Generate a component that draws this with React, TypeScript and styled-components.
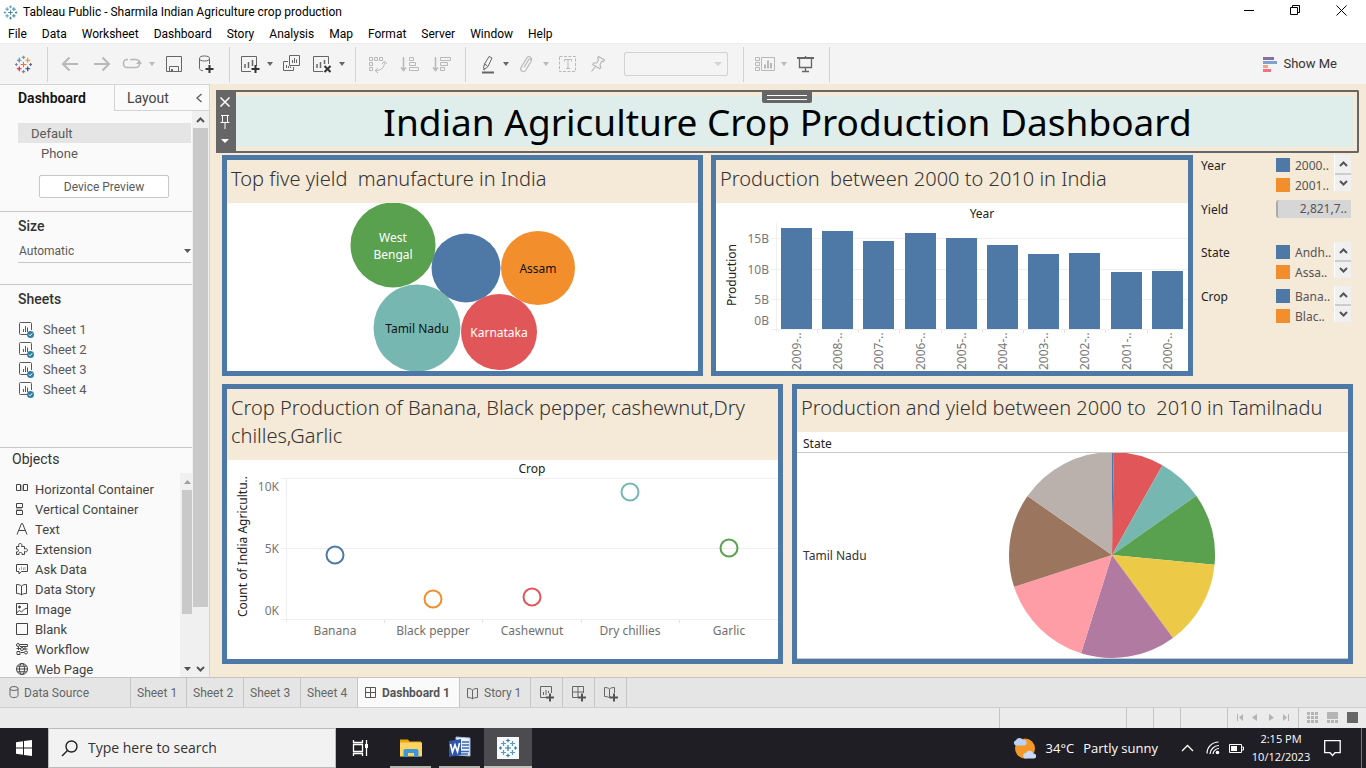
import React from "react";
import styled, { createGlobalStyle, css } from "styled-components";

const uiFont = `"Open Sans", "Noto Sans", sans-serif`;
const panelFont = `Roboto, "Liberation Sans", sans-serif`;
const vizFont = `"Noto Sans", "Open Sans", sans-serif`;

const color = {
  blue: "#4e79a7",
  orange: "#f28e2b",
  red: "#e15759",
  teal: "#76b7b2",
  green: "#59a14f",
  yellow: "#edc948",
  purple: "#b07aa1",
  pink: "#ff9da7",
  brown: "#9c755f",
  grey: "#bab0ac",
  canvas: "#f5e9d8",
  dark: "#666666",
};

const GlobalStyle = createGlobalStyle`
  *, *::before, *::after { box-sizing: border-box; }
  body { margin: 0; background: #fff; }
  button, input, select {
    font: inherit; color: inherit; background: none; border: 0; padding: 0; margin: 0;
    border-radius: 0; outline: none;
  }
  ul { list-style: none; margin: 0; padding: 0; }
  h1, h2 { margin: 0; font: inherit; }
  svg { display: block; }
`;

const Page = styled.div`
  display: flex;
  flex-direction: column;
  height: 100vh;
  min-height: 640px;
  overflow: hidden;
  font-family: ${panelFont};
`;

/* ---------- Window title and menus ---------- */

const TitleBar = styled.header`
  display: flex;
  align-items: center;
  height: 24px;
  flex: none;
  padding: 0 2px 0 3px;
  font: 12px/16px ${panelFont};
  color: #000;
`;
const WindowTitle = styled.h1`
  flex: 1;
  margin-left: 5px;
`;
const WindowButton = styled.button`
  display: flex;
  width: 46px;
  height: 24px;
  padding-top: 5px;
  justify-content: center;
`;
const MenuBar = styled.nav`
  display: flex;
  height: 19px;
  flex: none;
  padding-left: 1px;
  font: 12px/20px ${panelFont};
  color: #000;
`;
const MenuItem = styled.button`
  padding: 0 8px 0 7px;
`;

/* ---------- Toolbar ---------- */

const Toolbar = styled.div`
  display: flex;
  align-items: stretch;
  height: 41px;
  flex: none;
  background: #f4f4f4;
  border-top: 1px solid #ececec;
`;
const ToolGroup = styled.div<{ $flush?: boolean }>`
  display: flex;
  align-items: center;
  padding: ${(p) => (p.$flush ? 0 : "0 7px 0 6px")};
`;
const ToolSeparator = styled.div`
  width: 1px;
  margin: 3px 0 2px;
  background: #d2d2d2;
`;
const ToolButton = styled.button<{ $w: number; $off?: boolean }>`
  display: flex;
  align-items: center;
  justify-content: center;
  width: ${(p) => p.$w}px;
  height: 32px;
  color: ${(p) => (p.$off ? "#b8b8b8" : "#666")};
`;
const FitSelect = styled.div`
  display: flex;
  align-items: center;
  width: 104px;
  height: 24px;
  margin: 0 8px 0 12px;
  padding-right: 5px;
  border: 1px solid #d2d2d2;
  border-radius: 2px;
  color: #d2d2d2;
  select {
    flex: 1;
    appearance: none;
  }
`;
const ShowMe = styled.button`
  display: flex;
  align-items: center;
  gap: 6px;
  margin: 0 29px 0 auto;
  font: 13px/18px ${panelFont};
  color: #333;
`;

/* ---------- Side pane ---------- */

const Main = styled.main`
  display: flex;
  flex: 1;
  min-height: 0;
`;
const SidePane = styled.aside`
  display: flex;
  flex-direction: column;
  width: 210px;
  flex: none;
  background: #fafafa;
  border-top: 1px solid #d4d4d4;
  border-right: 1px solid #d4d4d4;
  color: #5a5a5a;
  font-size: 13px;
`;
const PaneTabs = styled.div`
  display: flex;
  height: 26px;
  flex: none;
`;
const PaneTab = styled.button<{ $active?: boolean }>`
  text-align: left;
  ${(p) =>
    p.$active
      ? css`
          width: 114px;
          padding-left: 18px;
          font-size: 14px;
          font-weight: 600;
          color: #111;
        `
      : css`
          flex: 1;
          padding-left: 12px;
          border-left: 1px solid #d4d4d4;
          border-bottom: 1px solid #d4d4d4;
          font-size: 14px;
          color: #444;
        `}
`;
const CollapseButton = styled.button`
  display: flex;
  align-items: center;
  justify-content: center;
  width: 20px;
  border-bottom: 1px solid #d4d4d4;
`;
const PaneBody = styled.div`
  display: flex;
  flex: 1;
  min-height: 0;
`;
const PaneContent = styled.div`
  display: flex;
  flex-direction: column;
  flex: 1;
  min-width: 0;
`;
const Section = styled.section<{ $h: number }>`
  height: ${(p) => p.$h}px;
  flex: none;
  padding: 0 1px 0 18px;
  border-bottom: 1px solid #c8c8c8;
`;
const DeviceList = styled.ul`
  padding-top: 12px;
`;
const Device = styled.li<{ $active?: boolean }>`
  height: 20px;
  padding-left: ${(p) => (p.$active ? 13 : 23)}px;
  line-height: 21px;
  background: ${(p) => (p.$active ? "#e5e5e5" : "none")};
`;
const PreviewButton = styled.button`
  display: block;
  width: 130px;
  height: 23px;
  margin: 12px 0 0 21px;
  border: 1px solid #c8c8c8;
  border-radius: 2px;
  background: #fff;
  font-size: 12px;
`;
const SectionTitle = styled.h2`
  padding: 4px 0 0;
  font-size: 14px;
  line-height: 20px;
  font-weight: 500;
  color: #333;
`;
const SizeField = styled.div`
  display: flex;
  align-items: center;
  height: 26px;
  margin-top: 1px;
  padding-top: 2px;
  border-bottom: 1px solid #c8c8c8;
  font-size: 12px;
  select {
    flex: 1;
    padding-left: 1px;
    appearance: none;
  }
`;
const ItemList = styled.ul`
  padding-top: 10px;
`;
const Item = styled.li<{ $gap: number }>`
  display: flex;
  align-items: center;
  gap: ${(p) => p.$gap}px;
  height: 20px;
  white-space: nowrap;
`;
const ObjectsSection = styled.section`
  display: flex;
  flex-direction: column;
  flex: 1;
  min-height: 0;
`;
const ObjectsTitle = styled.h2`
  padding: 1px 0 4px 12px;
  font-size: 14px;
  line-height: 20px;
  color: #333;
`;
const ObjectsBody = styled.div`
  display: flex;
  flex: 1;
  min-height: 0;
  overflow: hidden;
  color: #444;
`;
const ObjectList = styled.ul`
  flex: 1;
  padding: 6px 0 0 15px;
`;
const Scrollbar = styled.div<{ $w: number; $pad: string }>`
  display: flex;
  flex-direction: column;
  align-items: center;
  width: ${(p) => p.$w}px;
  flex: none;
  padding: ${(p) => p.$pad};
  background: #f0f0f0;
`;
const ScrollArrow = styled.button`
  display: flex;
  align-items: center;
  justify-content: center;
  width: 100%;
  height: 17px;
  flex: none;
`;
const ScrollTrack = styled.div`
  flex: 1;
  width: 100%;
`;
const ScrollThumb = styled.div<{ $size: string }>`
  height: ${(p) => p.$size};
  background: #c9c9c9;
`;

/* ---------- Dashboard canvas ---------- */

const Canvas = styled.section`
  display: flex;
  flex-direction: column;
  flex: 1;
  min-width: 0;
  padding: 6px 0 13px;
  background: ${color.canvas};
  font-family: ${vizFont};
  color: #333;
`;
const TitleZone = styled.div`
  position: relative;
  display: flex;
  height: 63px;
  flex: none;
  margin: 0 7px 2px 6px;
  border: 2px solid ${color.dark};
  border-left: 0;
  border-radius: 0 2px 2px 0;
`;
const ZoneControls = styled.div`
  display: flex;
  flex-direction: column;
  width: 20px;
  background: ${color.dark};
  color: #fff;
  button {
    display: flex;
    align-items: center;
    justify-content: center;
    width: 18px;
    height: 20px;
  }
`;
const ZoneGrip = styled.div`
  position: absolute;
  top: 0;
  left: 50%;
  width: 50px;
  height: 11px;
  margin-left: -25px;
  padding: 3px 5px 0;
  border-radius: 0 0 2px 2px;
  background: ${color.dark};
  &::before {
    content: "";
    display: block;
    height: 5px;
    border-top: 1px solid #fff;
    border-bottom: 1px solid #fff;
  }
`;
const DashboardTitle = styled.h1`
  flex: 1;
  margin: 4px 4px 4px 0;
  padding-right: 14px;
  background: #dfeeea;
  color: #000;
  font-size: 37px;
  line-height: 51px;
  height: 51px;
  text-align: center;
  white-space: nowrap;
`;
const Row = styled.div<{ $grow: number; $gap: number; $top?: number }>`
  display: flex;
  gap: ${(p) => p.$gap}px;
  flex: ${(p) => p.$grow} 1 0;
  min-height: 0;
  margin-top: ${(p) => p.$top ?? 0}px;
  padding: 0 13px 0 12px;
`;
const Panel = styled.article<{ $grow?: number }>`
  display: flex;
  flex-direction: column;
  flex: ${(p) => p.$grow ?? 1} 1 0;
  min-width: 0;
  border: 5px solid ${color.blue};
  background: #fff;
`;
const PanelTitle = styled.h2`
  flex: none;
  padding: 5px 4px 10px;
  background: ${color.canvas};
  color: #333;
  font-size: 20px;
  line-height: 28px;
  font-weight: 300;
  white-space: pre-wrap;
`;
const Chart = styled.svg`
  flex: 1 1 0;
  width: 100%;
  min-height: 0;
  font-family: ${vizFont};
  font-size: 12px;
`;

const Legends = styled.div`
  display: flex;
  flex-direction: column;
  width: 152px;
  flex: none;
`;
const Legend = styled.div<{ $h: number }>`
  display: flex;
  height: ${(p) => p.$h}px;
  flex: none;
  font-size: 12px;
`;
const LegendName = styled.span`
  width: 75px;
  line-height: 22px;
  color: #222;
`;
const LegendKeys = styled.ul`
  flex: 1;
`;
const LegendKey = styled.li<{ $fill: string }>`
  display: flex;
  align-items: center;
  gap: 5px;
  height: 20px;
  color: #555;
  &::before {
    content: "";
    width: 14px;
    height: 14px;
    background: ${(p) => p.$fill};
  }
`;
const LegendScroll = styled.div`
  width: 17px;
  height: 36px;
  margin-right: 2px;
  background: #f0f0f0;
  border-left: 1px solid #fff;
  button {
    display: flex;
    align-items: center;
    justify-content: center;
    width: 16px;
    height: 18px;
  }
  button + button {
    border-top: 2px solid #cdcdcd;
  }
`;
const YieldRange = styled.div`
  width: 75px;
  height: 18px;
  margin-top: 1px;
  padding-right: 4px;
  border-left: 2px solid #aaa;
  border-radius: 3px 0 0 3px;
  background: #d6d6d6;
  color: #555;
  line-height: 18px;
  text-align: right;
`;

/* ---------- Sheet tabs and status ---------- */

const SheetTabs = styled.nav`
  display: flex;
  height: 31px;
  flex: none;
  background: #e5e5e5;
  border-top: 1px solid #c4c4c4;
  border-bottom: 1px solid #cfcfcf;
  font-size: 12px;
  color: #666;
`;
const SheetTab = styled.button<{ $w: number; $active?: boolean }>`
  display: flex;
  align-items: center;
  gap: 5px;
  width: ${(p) => p.$w}px;
  padding-left: 6px;
  border-right: 1px solid #c4c4c4;
  white-space: nowrap;
  ${(p) =>
    p.$active &&
    css`
      background: #fafafa;
      font-weight: 700;
      color: #555;
    `}
`;
const StatusBar = styled.div`
  display: flex;
  justify-content: flex-end;
  height: 20px;
  flex: none;
  background: #ebebeb;
`;
const StatusCell = styled.div<{ $w: number }>`
  display: flex;
  align-items: center;
  justify-content: space-around;
  width: ${(p) => p.$w}px;
  padding: 0 4px 1px;
  border-left: 1px solid #c4c4c4;
  color: #b4b4b4;
`;

/* ---------- Taskbar ---------- */

const Taskbar = styled.footer`
  display: flex;
  align-items: stretch;
  height: 40px;
  flex: none;
  background: #1f1e24;
  color: #fff;
  font: 11px/18px ${uiFont};
`;
const TaskButton = styled.button<{ $w: number; $running?: boolean; $active?: boolean }>`
  display: flex;
  align-items: center;
  justify-content: center;
  width: ${(p) => p.$w}px;
  ${(p) =>
    p.$running &&
    css`
      margin: 0 4px;
      width: ${p.$w - 8}px;
      border-bottom: 2px solid #b5b5ae;
      border-top: 2px solid transparent;
    `}
  ${(p) =>
    p.$active &&
    css`
      background: #4b4b50;
      border-bottom: 2px solid #c3c3bc;
      padding-top: 2px;
    `}
`;
const SearchBox = styled.label`
  display: flex;
  align-items: center;
  gap: 10px;
  width: 288px;
  padding-left: 12px;
  background: #f2f2f2;
  border: 1px solid #bbb;
  color: #222;
  input {
    flex: 1;
    min-width: 0;
    font-size: 14px;
  }
  input::placeholder {
    color: #333;
    opacity: 1;
  }
`;
const Tray = styled.div`
  display: flex;
  align-items: center;
  margin-left: auto;
`;
const TrayButton = styled.button<{ $w: number }>`
  display: flex;
  align-items: center;
  justify-content: center;
  width: ${(p) => p.$w}px;
  height: 40px;
`;
const Weather = styled.button`
  display: flex;
  align-items: center;
  gap: 9px;
  margin-right: 15px;
  font-size: 13px;
`;
const Clock = styled.time`
  width: 68px;
  text-align: center;
`;
const ShowDesktop = styled.button`
  width: 5px;
  height: 40px;
  margin-left: 12px;
  border-left: 1px solid #77777a;
`;

/* ---------- Icons ---------- */

type IconProps = { w?: number; h?: number; children: React.ReactNode };
const Icon = ({ w = 20, h = 20, children }: IconProps) => (
  <svg width={w} height={h} viewBox={`0 0 ${w} ${h}`} fill="none" stroke="currentColor" aria-hidden="true">
    {children}
  </svg>
);

const Caret = ({ size = 6, fill = "currentColor" }: { size?: number; fill?: string }) => (
  <svg width={size} height="4" viewBox="0 0 6 4" preserveAspectRatio="none" aria-hidden="true">
    <path d="M0 0h6L3 4z" fill={fill} />
  </svg>
);
const Chevron = ({ down, tone = "#555", size = 9 }: { down?: boolean; tone?: string; size?: number }) => (
  <svg width={size} height="6" viewBox="0 0 9 6" fill="none" stroke={tone} strokeWidth="2" aria-hidden="true">
    <path d={down ? "M1 1l3.500 3.500L8 1" : "M1 5l3.500-3.500L8 5"} />
  </svg>
);

const marks: [number, number, number][] = [
  [10, 10, 3],
  [10, 2.5, 1.8],
  [10, 17.500, 1.8],
  [2.5, 10, 1.5],
  [17.500, 10, 1.5],
  [5.5, 5.500, 2.5],
  [14.500, 5.500, 2.5],
  [5.500, 14.500, 2.5],
  [14.500, 14.500, 2.5],
];
const TableauMark = ({ size, tones }: { size: number; tones: string[] }) => (
  <svg width={size} height={size} viewBox="0 0 20 20" strokeWidth="1.200" aria-hidden="true">
    {marks.map(([x, y, r], i) => (
      <path key={i} d={`M${x - r} ${y}h${2 * r}M${x} ${y - r}v${2 * r}`} stroke={tones[i % tones.length]} />
    ))}
  </svg>
);
const brandTones = ["#e8762d", "#7199a6", "#7b87b0", "#7b87b0", "#5b6591", "#59879b", "#eb912c", "#c72035", "#1f457e"];

const PlusMark = ({ x, y }: { x: number; y: number }) => (
  <path d={`M${x - 4} ${y}h8M${x} ${y - 4}v8`} stroke="#333" strokeWidth="2" />
);

const SheetIcon = () => (
  <Icon w={17} h={17}>
    <path d="M11 13.500H2.500a1 1 0 0 1-1-1v-10a1 1 0 0 1 1-1h10a1 1 0 0 1 1 1V9M5.500 8v3M7.500 5v6M9.500 6.500V11" />
    <circle cx="12.500" cy="13.500" r="3.500" fill="#2e7fa3" stroke="none" />
    <path d="M10.800 13.500l1.300 1.300 2.200-2.500" stroke="#fff" />
  </Icon>
);
const BookPath = "M1.500 2.500c2 0 3.500.3 5 1.500 1.500-1.200 3-1.500 5-1.500v9c-2 0-3.500.3-5 1.300-1.500-1-3-1.300-5-1.300zM6.500 4v9";

const objects: { name: string; icon: React.ReactNode }[] = [
  {
    name: "Horizontal Container",
    icon: (
      <>
        <path d="M5 3h4v6H5z" fill="#bbb" stroke="none" />
        <path d="M1.500 2.500h4v6h-4zM8.500 2.500h4v6h-4z" />
      </>
    ),
  },
  {
    name: "Vertical Container",
    icon: (
      <>
        <path d="M1 5h6v4H1z" fill="#bbb" stroke="none" />
        <path d="M1.500 1.500h6v4h-6zM1.500 8.500h6v4h-6z" />
      </>
    ),
  },
  { name: "Text", icon: <path d="M2 12.500L6.500 1.500h1L12 12.500M3.800 8.500h6.400" /> },
  {
    name: "Extension",
    icon: (
      <path d="M1.500 4.500h2.500c-.8-1.500-.3-3 1.300-3s2 1.500 1.200 3h3V7c1.500-.8 3-.3 3 1.200s-1.500 2-3 1.200v3.100H7c.5-1.500-.3-2-1.500-2S3.500 11 4 12.500H1.500V9.800c1.300.5 2-.2 2-1.300s-.7-1.800-2-1.300z" />
    ),
  },
  {
    name: "Ask Data",
    icon: (
      <>
        <path d="M1.500 2.500h11v7H6.500L4 12V9.500H1.500z" />
        <path d="M4.500 8V6M6.500 8V4.500M8.500 8V5.500M10 8V5" stroke="#aaa" />
      </>
    ),
  },
  { name: "Data Story", icon: <path d={BookPath} /> },
  {
    name: "Image",
    icon: (
      <>
        <path d="M1.500 1.500h11v11h-11z" />
        <path d="M2 10.500l2.500-2 2 1.500 3-3 3-1" />
        <circle cx="4.500" cy="5" r="1" fill="currentColor" />
      </>
    ),
  },
  { name: "Blank", icon: <path d="M1.500 1.500h11v11h-11z" /> },
  {
    name: "Workflow",
    icon: (
      <>
        <circle cx="3" cy="3" r="1.500" />
        <circle cx="11" cy="10.500" r="1.500" />
        <circle cx="7" cy="7" r="1.500" />
        <path d="M5 2.500h7.500v2H5M1.500 6.500h4M8.500 7h4M3.500 5v3M2 9.500h3v3H2zM6 10.500h3M10 5v3" />
      </>
    ),
  },
  {
    name: "Web Page",
    icon: (
      <>
        <circle cx="7" cy="7" r="5.500" />
        <ellipse cx="7" cy="7" rx="2.500" ry="5.500" />
        <path d="M1.500 7h11M2.300 4.200h9.400M2.300 9.800h9.400" />
      </>
    ),
  },
];

/* ---------- Charts ---------- */

const bubbles = [
  { x: 166, y: 42, r: 42.5, fill: color.green, text: "#fff", lines: ["West", "Bengal"] },
  { x: 239, y: 65, r: 34.500, fill: color.blue, text: "#fff", lines: [] },
  { x: 311, y: 65, r: 37, fill: color.orange, text: "#111", lines: ["Assam"] },
  { x: 190, y: 125, r: 43.500, fill: color.teal, text: "#111", lines: ["Tamil Nadu"] },
  { x: 272, y: 129, r: 38, fill: color.red, text: "#fff", lines: ["Karnataka"] },
];
const BubbleChart = () => (
  <Chart viewBox="0 0 471 168" role="img" aria-label="Top five states by yield">
    {bubbles.map((b) => (
      <g key={b.fill}>
        <circle cx={b.x} cy={b.y} r={b.r} fill={b.fill} />
        {b.lines.map((line, i) => (
          <text
            key={line}
            x={b.x}
            y={b.y + 5 + (i * 2 - (b.lines.length - 1)) * 8.5}
            fill={b.text}
            textAnchor="middle"
          >
            {line}
          </text>
        ))}
      </g>
    ))}
  </Chart>
);

const production = [
  { year: 2009, h: 101 },
  { year: 2008, h: 98 },
  { year: 2007, h: 88 },
  { year: 2006, h: 96 },
  { year: 2005, h: 91 },
  { year: 2004, h: 84 },
  { year: 2003, h: 75 },
  { year: 2002, h: 76 },
  { year: 2001, h: 57 },
  { year: 2000, h: 58 },
];
const BarChart = () => (
  <Chart viewBox="0 0 472 168" role="img" aria-label="Production by year">
    <path d="M55 35.500H472M55 66.500H472M55 96.500H472M55 126.500H472M60.500 20V129" stroke="#efefef" />
    <text x="266" y="15" textAnchor="middle" fill="#222">
      Year
    </text>
    <text transform="translate(20 72) rotate(-90)" textAnchor="middle" fill="#222">
      Production
    </text>
    {[
      ["15B", 40],
      ["10B", 71],
      ["5B", 101],
      ["0B", 122],
    ].map(([t, y]) => (
      <text key={t} x="53" y={y} textAnchor="end" fill="#787878">
        {t}
      </text>
    ))}
    {production.map((p, i) => {
      const x = 65 + Math.round(i * 41.2);
      return (
        <g key={p.year}>
          <rect x={x} y={126 - p.h} width="31" height={p.h} fill={color.blue} />
          <path d={`M${x + 36.500} 127v3`} stroke="#e4e4e4" />
          <text transform={`translate(${x + 20} 167) rotate(-90)`} fill="#787878">
            {p.year}-..
          </text>
        </g>
      );
    })}
  </Chart>
);

const crops = [
  { name: "Banana", y: 95, stroke: color.blue },
  { name: "Black pepper", y: 139, stroke: color.orange },
  { name: "Cashewnut", y: 137, stroke: color.red },
  { name: "Dry chillies", y: 32, stroke: color.teal },
  { name: "Garlic", y: 88, stroke: color.green },
];
const CropChart = () => (
  <Chart viewBox="0 0 551 199" role="img" aria-label="Records by crop">
    <path d="M54 18.500H551M54 88.500H551M54 159.500H551M59.500 18V163" stroke="#efefef" />
    <text x="305" y="13" textAnchor="middle" fill="#222">
      Crop
    </text>
    <text transform="translate(20 157) rotate(-90)" fill="#222">
      Count of India Agricultu..
    </text>
    {[
      ["10K", 31],
      ["5K", 93],
      ["0K", 155],
    ].map(([t, y]) => (
      <text key={t} x="52" y={y} textAnchor="end" fill="#787878">
        {t}
      </text>
    ))}
    {crops.map((c, i) => {
      const x = 108 + Math.round(i * 98.400);
      return (
        <g key={c.name}>
          <circle cx={x} cy={c.y} r="8.500" fill="none" stroke={c.stroke} strokeWidth="2" />
          <path d={`M${x + 49.500} 160v3`} stroke="#e4e4e4" />
          <text x={x} y="175" textAnchor="middle" fill="#707070">
            {c.name}
          </text>
        </g>
      );
    })}
  </Chart>
);

const slices = [
  { to: 1, fill: color.blue },
  { to: 29.300, fill: color.red },
  { to: 54.900, fill: color.teal },
  { to: 95.400, fill: color.green },
  { to: 143.700, fill: color.yellow },
  { to: 197.500, fill: color.purple },
  { to: 252, fill: color.pink },
  { to: 304.900, fill: color.brown },
  { to: 360, fill: color.grey },
];
const PieChart = () => {
  const cx = 315;
  const cy = 123;
  const r = 103;
  const at = (deg: number) => {
    const a = (deg * Math.PI) / 180;
    return `${cx + r * Math.sin(a)} ${cy - r * Math.cos(a)}`;
  };
  return (
    <Chart viewBox="0 0 551 227" role="img" aria-label="Production and yield in Tamil Nadu">
      <text x="6" y="16" fill="#222">
        State
      </text>
      <text x="6" y="128" fill="#333">
        Tamil Nadu
      </text>
      {slices.map((s, i) => (
        <path
          key={s.fill}
          d={`M${cx} ${cy}L${at(i ? slices[i - 1].to : 0)}A${r} ${r} 0 0 1 ${at(s.to)}Z`}
          fill={s.fill}
        />
      ))}
      <path d="M0 20.500H551M0 226.500H551" stroke="#c8c8c8" />
    </Chart>
  );
};

/* ---------- Page parts ---------- */

const LegendBlock = ({ name, keys, h }: { name: string; keys: string[]; h: number }) => (
  <Legend $h={h}>
    <LegendName>{name}</LegendName>
    <LegendKeys>
      <LegendKey $fill={color.blue}>{keys[0]}</LegendKey>
      <LegendKey $fill={color.orange}>{keys[1]}</LegendKey>
    </LegendKeys>
    <LegendScroll>
      <button aria-label={`Scroll ${name} up`}>
        <Chevron />
      </button>
      <button aria-label={`Scroll ${name} down`}>
        <Chevron down />
      </button>
    </LegendScroll>
  </Legend>
);

const ToolbarRow = () => (
  <Toolbar>
    <ToolGroup $flush>
      <ToolButton $w={47} aria-label="Start page">
        <TableauMark size={19} tones={brandTones} />
      </ToolButton>
    </ToolGroup>
    <ToolSeparator />
    <ToolGroup>
      <ToolButton $w={32} $off aria-label="Undo">
        <Icon>
          <path d="M18 10H3M9.500 3.500L3 10l6.500 6.500" strokeWidth="2" />
        </Icon>
      </ToolButton>
      <ToolButton $w={32} $off aria-label="Redo">
        <Icon>
          <path d="M2 10h15M10.500 3.500L17 10l-6.500 6.500" strokeWidth="2" />
        </Icon>
      </ToolButton>
      <ToolButton $w={28} $off aria-label="Replay">
        <Icon>
          <path d="M6 5.500H5a3.500 3.500 0 0 0-3.500 3.500v1A3.500 3.500 0 0 0 5 13.500h9a3.500 3.500 0 0 0 3.500-3.500V9A3.500 3.500 0 0 0 14 5.500H8" strokeWidth="1.500" />
          <path d="M14 10l3.500-4 2.500 4z" fill="currentColor" stroke="none" />
        </Icon>
      </ToolButton>
      <ToolButton $w={12} $off aria-label="Replay options">
        <Caret />
      </ToolButton>
      <ToolButton $w={32} aria-label="Save">
        <Icon>
          <path d="M2.500 2.500h15v15h-15zM5.500 17v-4.500h9V17" />
          <path d="M7 15h2v2H7z" fill="currentColor" stroke="none" />
        </Icon>
      </ToolButton>
      <ToolButton $w={32} aria-label="New data source">
        <Icon>
          <ellipse cx="8.500" cy="4.500" rx="5" ry="2.500" />
          <path d="M3.500 4.500v10c0 1 1.500 2 3.500 2.300M13.500 4.500V10" />
          <PlusMark x={13.5} y={15} />
        </Icon>
      </ToolButton>
    </ToolGroup>
    <ToolSeparator />
    <ToolGroup>
      <ToolButton $w={28} aria-label="New worksheet">
        <Icon>
          <path d="M11 17.500H1.500v-15h15V12" />
          <path d="M5 10v4M8.500 8v6M12.500 6v6" strokeWidth="1.500" />
          <PlusMark x={15.5} y={15} />
        </Icon>
      </ToolButton>
      <ToolButton $w={12} aria-label="New worksheet options">
        <Caret />
      </ToolButton>
      <ToolButton $w={32} aria-label="Duplicate">
        <Icon>
          <path d="M7.500 1.500h10v10h-10z" />
          <path d="M6 7.500H1.500v9h10V13M10.500 9V6M12.500 9V4M14.500 9V5.500M4.500 14v-3M6.500 14v-2M8.500 14v-1.500" />
        </Icon>
      </ToolButton>
      <ToolButton $w={28} aria-label="Clear sheet">
        <Icon>
          <path d="M11 17.500H1.500v-15h15V10" />
          <path d="M5 10v4M8.500 8v6M12.500 6v4" strokeWidth="1.500" />
          <path d="M12.500 12l6 6M18.500 12l-6 6" stroke="#333" strokeWidth="2" />
        </Icon>
      </ToolButton>
      <ToolButton $w={12} aria-label="Clear options">
        <Caret />
      </ToolButton>
    </ToolGroup>
    <ToolSeparator />
    <ToolGroup>
      <ToolButton $w={32} $off aria-label="Swap rows and columns">
        <Icon>
          <path d="M1.500 3.500h3v3h-3zM6.500 3.500h3v3h-3zM11.500 3.500h3v3h-3zM1.500 8.500h3v3h-3zM1.500 13.500h3v3h-3zM8 16.500c5 0 8.500-3 8.500-8M14 10l2.500-3L19 10M10 14l-3 2.500L10 19" />
        </Icon>
      </ToolButton>
      <ToolButton $w={32} $off aria-label="Sort ascending">
        <Icon>
          <path d="M3.500 3v13M1 13.500l2.500 3 2.500-3" strokeWidth="1.500" />
          <path d="M9.500 3.500h4v3h-4zM9.500 8.500h6v3h-6zM9.500 13.500h9v3h-9z" />
        </Icon>
      </ToolButton>
      <ToolButton $w={32} $off aria-label="Sort descending">
        <Icon>
          <path d="M3.500 3v13M1 13.500l2.500 3 2.500-3" strokeWidth="1.500" />
          <path d="M8.500 3.500h10v3h-10zM8.500 8.500h7v3h-7zM8.500 13.500h4v3h-4z" />
        </Icon>
      </ToolButton>
    </ToolGroup>
    <ToolSeparator />
    <ToolGroup>
      <ToolButton $w={28} aria-label="Highlight">
        <Icon>
          <path d="M8.500 10L13 2.500l3 1.500-4 8.500-3 2.500-1.500-1z" />
          <path d="M8.500 10l3 2M7 15l2 1" />
          <path d="M6 18.500h12" strokeWidth="2" />
        </Icon>
      </ToolButton>
      <ToolButton $w={12} aria-label="Highlight options">
        <Caret />
      </ToolButton>
      <ToolButton $w={28} $off aria-label="Group members">
        <Icon>
          <path d="M8 13.500l4.500-7.500c1-2 3.500-.5 2.500 1.500l-5 8.500c-2 3-6.500 1-5-2.500l5.500-9C12 1 17 3 15 7.500L11 14" strokeWidth="1.200" />
        </Icon>
      </ToolButton>
      <ToolButton $w={12} $off aria-label="Group options">
        <Caret />
      </ToolButton>
      <ToolButton $w={32} $off aria-label="Show mark labels">
        <Icon>
          <path d="M1.500 2.500h16v15h-16z" strokeDasharray="3 1.500" />
          <path d="M6.500 7.500v-2h7v2M10 5.500v9M8 14.500h4" />
        </Icon>
      </ToolButton>
      <ToolButton $w={28} $off aria-label="Fix axes">
        <Icon>
          <path d="M10.500 2.500l6 3.500-1 1.500-1.500-.3-2 3.300.8 3-1 1.200-7-4.200.8-1.500h3l2-3.500-1-1.500zM7.500 12.500L3.500 17.500" strokeWidth="1.200" />
        </Icon>
      </ToolButton>
      <FitSelect>
        <select aria-label="Fit" />
        <Caret size={8} />
      </FitSelect>
    </ToolGroup>
    <ToolSeparator />
    <ToolGroup>
      <ToolButton $w={28} $off aria-label="Show or hide cards">
        <Icon w={22}>
          <path d="M2.500 3.500h4v3h-4zM2.500 8.500h4v3h-4zM2.500 13.500h4v3h-4zM8.500 3.500h13v13h-13z" />
          <path d="M12 10.500v4M15 6.500v8M18 9v5.500" strokeWidth="2" />
        </Icon>
      </ToolButton>
      <ToolButton $w={12} $off aria-label="Card options">
        <Caret />
      </ToolButton>
      <ToolButton $w={32} aria-label="Presentation mode">
        <Icon>
          <path d="M1 4h17" strokeWidth="2" />
          <path d="M9.500 2v2M3.500 5v8.500h12V5M9.500 14v4M6 17.500h7" strokeWidth="1.300" />
        </Icon>
      </ToolButton>
    </ToolGroup>
    <ToolSeparator />
    <ShowMe>
      <svg width="14" height="15" viewBox="0 0 14 15" aria-hidden="true">
        <path d="M0 0h11v3H0z" fill="#86709c" />
        <path d="M0 4h14v3H0z" fill="#7fa3d0" />
        <path d="M0 8h5v3H0z" fill="#f4a483" />
        <path d="M0 12h8v3H0z" fill="#f77184" />
      </svg>
      Show Me
    </ShowMe>
  </Toolbar>
);

const SidePaneView = () => (
  <SidePane>
    <PaneTabs>
      <PaneTab $active>Dashboard</PaneTab>
      <PaneTab>Layout</PaneTab>
      <CollapseButton aria-label="Collapse pane">
        <Icon w={8} h={10}>
          <path d="M6.500 1L2 5l4.500 4" strokeWidth="1.300" />
        </Icon>
      </CollapseButton>
    </PaneTabs>
    <PaneBody>
      <PaneContent>
        <Section $h={101}>
          <DeviceList>
            <Device $active>Default</Device>
            <Device>Phone</Device>
          </DeviceList>
          <PreviewButton>Device Preview</PreviewButton>
        </Section>
        <Section $h={73}>
          <SectionTitle>Size</SectionTitle>
          <SizeField>
            <select aria-label="Size" defaultValue="Automatic">
              <option>Automatic</option>
            </select>
            <Caret size={7} />
          </SizeField>
        </Section>
        <Section $h={163}>
          <SectionTitle>Sheets</SectionTitle>
          <ItemList>
            {[1, 2, 3, 4].map((n) => (
              <Item key={n} $gap={8}>
                <SheetIcon />
                Sheet {n}
              </Item>
            ))}
          </ItemList>
        </Section>
        <ObjectsSection>
          <ObjectsTitle>Objects</ObjectsTitle>
          <ObjectsBody>
            <ObjectList>
              {objects.map((o) => (
                <Item key={o.name} $gap={6}>
                  <Icon w={14} h={14}>
                    {o.icon}
                  </Icon>
                  {o.name}
                </Item>
              ))}
            </ObjectList>
            <Scrollbar $w={12} $pad="0 0 0 2px">
              <ScrollArrow aria-label="Scroll objects up">
                <svg width="7" height="4" viewBox="0 0 7 4" aria-hidden="true">
                  <path d="M0 4h7L3.500 0z" fill="#a0a0a0" />
                </svg>
              </ScrollArrow>
              <ScrollTrack>
                <ScrollThumb $size="73%" />
              </ScrollTrack>
              <ScrollArrow aria-label="Scroll objects down">
                <Caret size={7} fill="#505050" />
              </ScrollArrow>
            </Scrollbar>
          </ObjectsBody>
        </ObjectsSection>
      </PaneContent>
      <Scrollbar $w={17} $pad="0 1px">
        <ScrollArrow aria-label="Scroll pane up">
          <Chevron />
        </ScrollArrow>
        <ScrollTrack>
          <ScrollThumb $size="90%" />
        </ScrollTrack>
        <ScrollArrow aria-label="Scroll pane down">
          <Chevron down />
        </ScrollArrow>
      </Scrollbar>
    </PaneBody>
  </SidePane>
);

const DashboardView = () => (
  <Canvas>
    <TitleZone>
      <ZoneControls>
        <button aria-label="Remove from dashboard">
          <Icon w={12} h={12}>
            <path d="M1.500 1.500l9 9M10.500 1.500l-9 9" strokeWidth="1.500" />
          </Icon>
        </button>
        <button aria-label="Fix height">
          <Icon w={10} h={14}>
            <path d="M1 .5h8M2.500 1v6M7.500 1v6M.5 7.500h9M5 8v6" />
          </Icon>
        </button>
        <button aria-label="More options">
          <Caret size={8} />
        </button>
      </ZoneControls>
      <DashboardTitle>Indian Agriculture Crop Production Dashboard</DashboardTitle>
      <ZoneGrip />
    </TitleZone>
    <Row $grow={221} $gap={8}>
      <Panel $grow={481}>
        <PanelTitle>{"Top five yield  manufacture in India"}</PanelTitle>
        <BubbleChart />
      </Panel>
      <Panel $grow={482}>
        <PanelTitle>{"Production  between 2000 to 2010 in India"}</PanelTitle>
        <BarChart />
      </Panel>
      <Legends>
        <LegendBlock name="Year" keys={["2000..", "2001.."]} h={44} />
        <Legend $h={43}>
          <LegendName>Yield</LegendName>
          <YieldRange>2,821,7..</YieldRange>
        </Legend>
        <LegendBlock name="State" keys={["Andh..", "Assa.."]} h={44} />
        <LegendBlock name="Crop" keys={["Bana..", "Blac.."]} h={44} />
      </Legends>
    </Row>
    <Row $grow={280} $gap={9} $top={8}>
      <Panel>
        <PanelTitle>Crop Production of Banana, Black pepper, cashewnut,Dry chilles,Garlic</PanelTitle>
        <CropChart />
      </Panel>
      <Panel>
        <PanelTitle>{"Production and yield between 2000 to  2010 in Tamilnadu"}</PanelTitle>
        <PieChart />
      </Panel>
    </Row>
  </Canvas>
);

const newTabs: { label: string; icon: React.ReactNode }[] = [
  { label: "New worksheet", icon: <path d="M8 12.500H1.500v-11h11V8M4.500 7v3M7 5v5M9.500 6v2" /> },
  { label: "New dashboard", icon: <path d="M8 12.500H1.500v-11h11V8M7 2v10M2 7h10" /> },
  { label: "New story", icon: <path d="M8 12c-.5.200-1 .400-1.500.800-1.500-1-3-1.300-5-1.300v-9c2 0 3.500.3 5 1.500 1.500-1.200 3-1.500 5-1.500V8M6.500 4v9" /> },
];

const SheetTabsView = () => (
  <SheetTabs>
    <SheetTab $w={131}>
      <Icon w={13} h={15}>
        <ellipse cx="8" cy="3.500" rx="4" ry="2" />
        <path d="M4 3.500v7c0 2.700 8 2.700 8 0v-7" />
      </Icon>
      Data Source
    </SheetTab>
    {[1, 2, 3, 4].map((n) => (
      <SheetTab key={n} $w={n === 1 ? 56 : 57}>
        Sheet {n}
      </SheetTab>
    ))}
    <SheetTab $w={102} $active>
      <Icon w={13} h={13}>
        <path d="M1.500 1.500h10v10h-10zM6.500 2v10M1 6.500h10" />
      </Icon>
      Dashboard 1
    </SheetTab>
    <SheetTab $w={71}>
      <Icon w={13} h={14}>
        <path d={BookPath} />
      </Icon>
      Story 1
    </SheetTab>
    {newTabs.map((t) => (
      <SheetTab key={t.label} $w={32} aria-label={t.label}>
        <Icon w={20} h={18}>
          <g transform="translate(2 1)">{t.icon}</g>
          <path d="M9 13.500h8M13 9.500v8" stroke="#555" strokeWidth="2" />
        </Icon>
      </SheetTab>
    ))}
  </SheetTabs>
);

const StatusView = () => (
  <StatusBar>
    <StatusCell $w={127} />
    <StatusCell $w={27} />
    <StatusCell $w={27} />
    <StatusCell $w={47} />
    <StatusCell $w={71}>
      {["M1 0h1v7H1zM7 0v7L3 3.500z", "M6 0v7L1 3.500z", "M2 0v7l5-3.500z", "M6 0h1v7H6zM1 0v7l4-3.500z"].map((d) => (
        <svg key={d} width="8" height="7" viewBox="0 0 8 7" aria-hidden="true">
          <path d={d} fill="currentColor" />
        </svg>
      ))}
    </StatusCell>
    <StatusCell $w={68}>
      <svg width="11" height="11" viewBox="0 0 11 11" aria-hidden="true">
        <path d="M0 0h3v3H0zM4 0h3v3H4zM8 0h3v3H8zM0 4h3v3H0zM4 4h3v3H4zM8 4h3v3H8zM0 8h3v3H0zM4 8h3v3H4zM8 8h3v3H8z" fill="currentColor" />
      </svg>
      <svg width="11" height="11" viewBox="0 0 11 11" aria-hidden="true">
        <path d="M0 0h11v7H0zM0 8h3v3H0zM4 8h3v3H4zM8 8h3v3H8z" fill="currentColor" />
      </svg>
      <svg width="11" height="11" viewBox="0 0 11 11" aria-hidden="true">
        <path d="M0 0h11v11H0z" fill="#666" />
      </svg>
    </StatusCell>
  </StatusBar>
);

const TaskbarView = () => (
  <Taskbar>
    <TaskButton $w={48} aria-label="Start">
      <svg width="16" height="16" viewBox="0 0 16 16" fill="#fff" aria-hidden="true">
        <path d="M0 2.200l7-1v6.400H0zM8 1l8-1v7.600H8zM0 8.500h7v6.300l-7-1zM8 8.500h8V16l-8-1.100z" />
      </svg>
    </TaskButton>
    <SearchBox>
      <Icon w={17} h={17}>
        <circle cx="10.500" cy="6.500" r="5.500" strokeWidth="1.400" />
        <path d="M6.500 10.500L1 16" strokeWidth="1.400" />
      </Icon>
      <input type="search" placeholder="Type here to search" aria-label="Search" />
    </SearchBox>
    <TaskButton $w={50} aria-label="Task view">
      <Icon w={18} h={18}>
        <path d="M1.500 5.500h9v7h-9zM1.500 1v2.500h9V1M1.500 17v-2.500h9V17M14.500 1v16" strokeWidth="1.300" />
        <path d="M13 5h3v4h-3z" fill="#fff" stroke="none" />
      </Icon>
    </TaskButton>
    <TaskButton $w={49} $running aria-label="File Explorer">
      <svg width="22" height="20" viewBox="0 0 22 20" aria-hidden="true">
        <path d="M0 1.500h8l1.500 2H21v4H0z" fill="#e8a60e" />
        <path d="M0 4.500h22v14H0z" fill="#fcd462" />
        <path d="M3.500 19v-6a2 2 0 0 1 2-2h11a2 2 0 0 1 2 2v6H14v-4H8v4z" fill="#3b97d9" />
      </svg>
    </TaskButton>
    <TaskButton $w={49} $running aria-label="Word">
      <svg width="24" height="24" viewBox="0 0 24 24" aria-hidden="true">
        <path d="M8 1l14 1v18l-14-1z" fill="#eef3fb" stroke="#9db4dc" />
        <path d="M14 6h7M14 9h7M14 12h7M9 15.500h12M9 18h11" stroke="#3d66b5" strokeWidth="1.500" />
        <path d="M1 5l12-2v16L1 21z" fill="#2b57ad" />
        <path d="M2.500 8l2 8 2.500-7 2.500 6.500L11.500 7" fill="none" stroke="#fff" strokeWidth="1.700" />
      </svg>
    </TaskButton>
    <TaskButton $w={48} $active aria-label="Tableau Public">
      <svg width="22" height="22" viewBox="-1 -1 22 22" strokeWidth="1.200" aria-hidden="true">
        <path d="M-1-1h22v22H-1z" fill="#f6f8f9" />
        {marks.map(([x, y, r], i) => (
          <path key={i} d={`M${x - r} ${y}h${2 * r}M${x} ${y - r}v${2 * r}`} stroke={i > 4 ? "#5a9dbb" : "#2b7fa6"} />
        ))}
      </svg>
    </TaskButton>
    <Tray>
      <Weather>
        <svg width="24" height="24" viewBox="0 0 24 24" aria-hidden="true">
          <circle cx="12" cy="12.500" r="10" fill="#f5982a" />
          <path d="M3 9.500a2.700 2.700 0 0 1 0-5.300A4 4 0 0 1 10 4a2.800 2.800 0 0 1 1.500 5.500z" fill="#bcd3f8" />
          <path d="M13 22.500a2.800 2.800 0 0 1 0-5.600 4 4 0 0 1 7.300.5 2.500 2.500 0 0 1 .5 5.100z" fill="#c9dbfa" />
        </svg>
        <span>34°C</span>
        <span>Partly sunny</span>
      </Weather>
      <TrayButton $w={28} aria-label="Show hidden icons">
        <Icon w={13} h={8}>
          <path d="M1 7l5.500-5.500L12 7" strokeWidth="1.300" />
        </Icon>
      </TrayButton>
      <TrayButton $w={24} aria-label="Network">
        <Icon w={14} h={14}>
          <path d="M1 12.500A11.500 11.500 0 0 1 12.500 1M4 13A9 9 0 0 1 13 4.500M7 13a6 6 0 0 1 6-5.500" strokeWidth="1.200" />
          <circle cx="11.500" cy="11.500" r="1.800" fill="#fff" stroke="none" />
        </Icon>
      </TrayButton>
      <TrayButton $w={22} aria-label="Battery">
        <Icon w={15} h={9}>
          <path d="M.5.500h12v8H.5zM13 3h1.500v3H13" />
          <path d="M2 2h6v5H2z" fill="#fff" stroke="none" />
        </Icon>
      </TrayButton>
      <Clock dateTime="2023-10-12T14:15">
        2:15 PM
        <br />
        10/12/2023
      </Clock>
      <TrayButton $w={34} aria-label="Notifications">
        <Icon w={17} h={17}>
          <path d="M.7.700h15.500v12H11L8.500 15.500 6 12.700H.7z" strokeWidth="1.300" />
        </Icon>
      </TrayButton>
      <ShowDesktop aria-label="Show desktop" />
    </Tray>
  </Taskbar>
);

const menus = ["File", "Data", "Worksheet", "Dashboard", "Story", "Analysis", "Map", "Format", "Server", "Window", "Help"];

export default function App() {
  return (
    <>
      <GlobalStyle />
      <Page>
        <TitleBar>
          <TableauMark size={15} tones={["#2f7ea6", "#4a93b5"]} />
          <WindowTitle>Tableau Public - Sharmila Indian Agriculture crop production</WindowTitle>
          <WindowButton aria-label="Minimize">
            <Icon w={10} h={10}>
              <path d="M0 5.500h10" />
            </Icon>
          </WindowButton>
          <WindowButton aria-label="Restore">
            <Icon w={10} h={10}>
              <path d="M.5 2.500h7v7h-7zM2.500 2V.5h7v7H8" />
            </Icon>
          </WindowButton>
          <WindowButton aria-label="Close">
            <Icon w={11} h={11}>
              <path d="M.5.500l10 10M10.500.500l-10 10" />
            </Icon>
          </WindowButton>
        </TitleBar>
        <MenuBar>
          {menus.map((m) => (
            <MenuItem key={m}>{m}</MenuItem>
          ))}
        </MenuBar>
        <ToolbarRow />
        <Main>
          <SidePaneView />
          <DashboardView />
        </Main>
        <SheetTabsView />
        <StatusView />
        <TaskbarView />
      </Page>
    </>
  );
}
